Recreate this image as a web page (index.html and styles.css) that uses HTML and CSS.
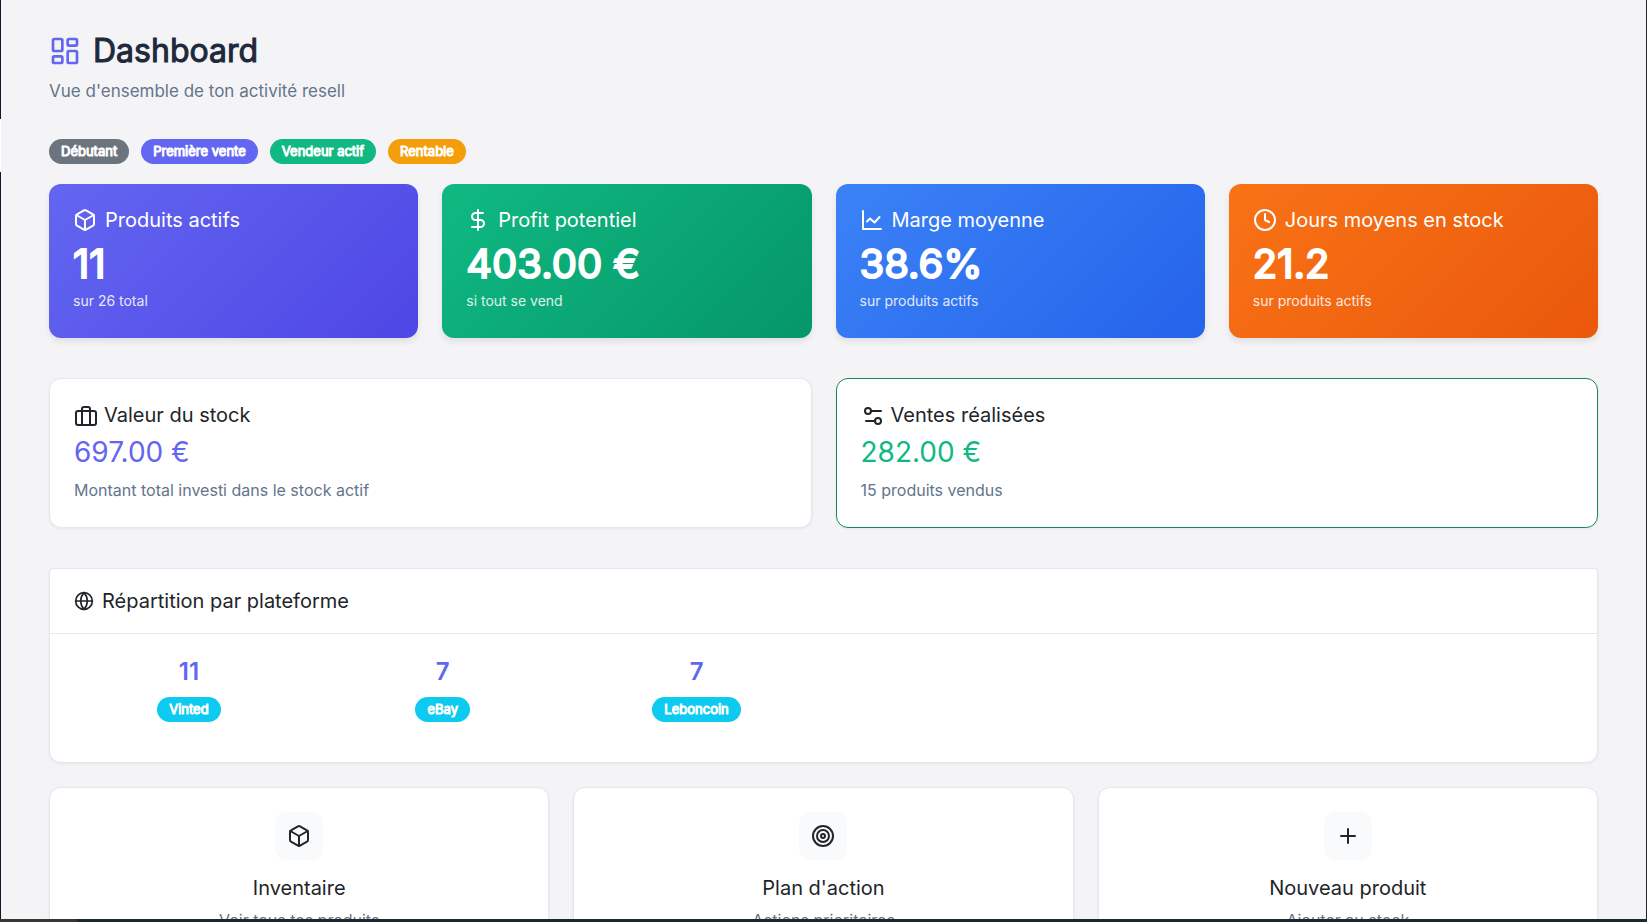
FILE: index.html
```html
<!DOCTYPE html>
<html lang="fr">
<head>
<meta charset="UTF-8">
<meta name="viewport" content="width=device-width, initial-scale=1.0">
<title>Dashboard</title>
<link rel="stylesheet" href="styles.css">
</head>
<body>
  <div class="app">
    <aside class="sidebar"><div class="sidebar-active"></div></aside>

    <main class="content">
      <header class="page-header">
        <h1>
          <svg class="icon icon-lg" viewBox="0 0 24 24"><rect x="3" y="3" width="7" height="9" rx="1"/><rect x="14" y="3" width="7" height="5" rx="1"/><rect x="14" y="12" width="7" height="9" rx="1"/><rect x="3" y="16" width="7" height="5" rx="1"/></svg>
          Dashboard
        </h1>
        <p>Vue d'ensemble de ton activité resell</p>
      </header>

      <div class="badges">
        <span class="badge badge-gray">Débutant</span>
        <span class="badge badge-primary">Première vente</span>
        <span class="badge badge-success">Vendeur actif</span>
        <span class="badge badge-warning">Rentable</span>
      </div>

      <!-- KPI -->
      <section class="stats">
        <div class="stat stat-indigo">
          <h2><svg class="icon" viewBox="0 0 24 24"><path d="M21 16V8a2 2 0 0 0-1-1.73l-7-4a2 2 0 0 0-2 0l-7 4A2 2 0 0 0 3 8v8a2 2 0 0 0 1 1.73l7 4a2 2 0 0 0 2 0l7-4A2 2 0 0 0 21 16z"/><path d="M3.3 7l8.7 5 8.7-5"/><path d="M12 22V12"/></svg>Produits actifs</h2>
          <div class="stat-value">11</div>
          <small>sur 26 total</small>
        </div>
        <div class="stat stat-green">
          <h2><svg class="icon" viewBox="0 0 24 24"><path d="M12 2v20"/><path d="M17 5H9.5a3.5 3.5 0 0 0 0 7h5a3.5 3.5 0 0 1 0 7H6"/></svg>Profit potentiel</h2>
          <div class="stat-value">403.00 €</div>
          <small>si tout se vend</small>
        </div>
        <div class="stat stat-blue">
          <h2><svg class="icon" viewBox="0 0 24 24"><path d="M3 3v18h18"/><path d="M7 13.5l3-3 4.5 4 5-5.5"/></svg>Marge moyenne</h2>
          <div class="stat-value">38.6%</div>
          <small>sur produits actifs</small>
        </div>
        <div class="stat stat-orange">
          <h2><svg class="icon" viewBox="0 0 24 24"><circle cx="12" cy="12" r="10"/><path d="M12 6v6l4 2"/></svg>Jours moyens en stock</h2>
          <div class="stat-value">21.2</div>
          <small>sur produits actifs</small>
        </div>
      </section>

      <section class="totals">
        <div class="card total">
          <h2><svg class="icon" viewBox="0 0 24 24"><rect x="2" y="8" width="20" height="14" rx="2"/><path d="M16 22V6a2 2 0 0 0-2-2h-4a2 2 0 0 0-2 2v16"/></svg>Valeur du stock</h2>
          <div class="total-value">697.00 €</div>
          <p>Montant total investi dans le stock actif</p>
        </div>
        <div class="card total total-sales">
          <h2><svg class="icon" viewBox="0 0 24 24"><path d="M20 8H10"/><path d="M14 18H5"/><circle cx="17" cy="18" r="3"/><circle cx="7" cy="8" r="3"/></svg>Ventes réalisées</h2>
          <div class="total-value">282.00 €</div>
          <p>15 produits vendus</p>
        </div>
      </section>

      <section class="card platforms">
        <h2><svg class="icon icon-sm" viewBox="0 0 24 24"><circle cx="12" cy="12" r="10"/><path d="M2 12h20"/><path d="M12 2a15.3 15.3 0 0 1 4 10 15.3 15.3 0 0 1-4 10 15.3 15.3 0 0 1-4-10 15.3 15.3 0 0 1 4-10z"/></svg>Répartition par plateforme</h2>
        <div class="platform-grid">
          <div class="platform">
            <strong>11</strong>
            <span class="badge badge-info">Vinted</span>
          </div>
          <div class="platform">
            <strong>7</strong>
            <span class="badge badge-info">eBay</span>
          </div>
          <div class="platform">
            <strong>7</strong>
            <span class="badge badge-info">Leboncoin</span>
          </div>
        </div>
      </section>

      <!-- raccourcis -->
      <nav class="actions">
        <a class="card action" href="#inventaire">
          <span class="action-icon"><svg class="icon" viewBox="0 0 24 24"><path d="M21 16V8a2 2 0 0 0-1-1.73l-7-4a2 2 0 0 0-2 0l-7 4A2 2 0 0 0 3 8v8a2 2 0 0 0 1 1.73l7 4a2 2 0 0 0 2 0l7-4A2 2 0 0 0 21 16z"/><path d="M3.3 7l8.7 5 8.7-5"/><path d="M12 22V12"/></svg></span>
          <h2>Inventaire</h2>
          <p>Voir tous tes produits</p>
        </a>
        <a class="card action" href="#plan">
          <span class="action-icon"><svg class="icon" viewBox="0 0 24 24"><circle cx="12" cy="12" r="10"/><circle cx="12" cy="12" r="6"/><circle cx="12" cy="12" r="2"/></svg></span>
          <h2>Plan d'action</h2>
          <p>Actions prioritaires</p>
        </a>
        <a class="card action" href="#nouveau">
          <span class="action-icon"><svg class="icon" viewBox="0 0 24 24"><path d="M12 5v14"/><path d="M5 12h14"/></svg></span>
          <h2>Nouveau produit</h2>
          <p>Ajouter au stock</p>
        </a>
      </nav>
    </main>
  </div>
  <div class="bottom-bar"></div>
</body>
</html>
```

FILE: styles.css
```css
* {
  box-sizing: border-box;
}

body {
  background-color: #f4f4f7;
  color: #212529;
  font-family: Inter, "Liberation Sans", sans-serif;
  font-size: 16px;
  line-height: 24px;
  display: flex;
  flex-direction: column;
  height: 100vh;
  margin: 0;
  overflow: hidden;
}

h1, h2, p {
  margin: 0;
}

h2 {
  display: flex;
  align-items: center;
  gap: 8px;
  font-size: 20px;
  font-weight: 400;
  line-height: 24px;
}

/* layout */
.app {
  display: flex;
  flex: 1;
  min-height: 0;
  border-right: 1px solid #26282c;
}

.sidebar {
  width: 1px;
  padding-top: 119px;
  background-color: #0f172a;
  box-shadow: 4px 0 12px rgba(0, 0, 0, 0.05);
}

.sidebar-active {
  height: 53px;
  background-color: #ffffff;
}

.content {
  flex: 1;
  padding: 32px 48px;
  overflow: hidden;
}

.bottom-bar {
  height: 3px;
  background: linear-gradient(to right, #3a3636 77px, #1f282c 77px);
}

.icon {
  width: 24px;
  height: 24px;
  flex-shrink: 0;
  fill: none;
  stroke: currentColor;
  stroke-width: 2;
  stroke-linecap: round;
  stroke-linejoin: round;
}

.icon-lg {
  width: 32px;
  height: 32px;
  color: #6366f1;
}

.icon-sm {
  width: 20px;
  height: 20px;
}

/* header */
.page-header {
  margin-bottom: 35px;
}

.page-header h1 {
  display: flex;
  align-items: center;
  gap: 12px;
  margin-bottom: 8px;
  color: #1e293b;
  font-size: 32px;
  font-weight: 400;
  line-height: 38px;
  -webkit-text-stroke: 1px #1e293b;
}

.page-header p {
  color: #64748b;
  font-size: 17px;
  line-height: 26px;
}

/* badges */
.badges {
  display: flex;
  gap: 12px;
  margin-bottom: 20px;
}

.badge {
  padding: 0 12px;
  border-radius: 50px;
  color: #ffffff;
  font-size: 13px;
  font-weight: 400;
  line-height: 25px;
  -webkit-text-stroke: 1px #ffffff;
}

.badge-gray { background-color: #6c757d; }
.badge-primary { background-color: #6366f1; }
.badge-success { background-color: #10b981; }
.badge-warning { background-color: #f59e0b; }
.badge-info { background-color: #0dcaf0; }

/* stats */
.stats {
  display: grid;
  grid-template-columns: repeat(4, 1fr);
  gap: 24px;
  margin-bottom: 40px;
}

.stat {
  padding: 24px;
  border-radius: 12px;
  color: #ffffff;
  box-shadow: 0 4px 6px rgba(0, 0, 0, 0.08);
}

.stat h2 {
  margin-bottom: 8px;
}

.stat-value {
  font-size: 40px;
  font-weight: 400;
  line-height: 48px;
  -webkit-text-stroke: 2px #ffffff;
}

.stat small {
  display: block;
  font-size: 14px;
  line-height: 26px;
  opacity: 0.85;
}

.stat-indigo { background: linear-gradient(135deg, #6366f1, #4f46e5); }
.stat-green { background: linear-gradient(135deg, #10b981, #059669); }
.stat-blue { background: linear-gradient(135deg, #3b82f6, #2563eb); }
.stat-orange { background: linear-gradient(135deg, #f97316, #ea580c); }

/* cards */
.card {
  background-color: #ffffff;
  border: 1px solid #e2e8f0;
  border-radius: 12px;
  box-shadow: 0 1px 3px rgba(0, 0, 0, 0.06);
}

.totals {
  display: grid;
  grid-template-columns: repeat(2, 1fr);
  gap: 24px;
  margin-bottom: 40px;
}

.total {
  padding: 24px;
}

.total h2 {
  gap: 6px;
  margin-bottom: 8px;
}

.total-value {
  margin-bottom: 8px;
  color: #6366f1;
  font-size: 28px;
  line-height: 34px;
}

.total p {
  color: #64748b;
  line-height: 26px;
}

.total-sales {
  border-color: #198754;
}

.total-sales .total-value {
  color: #10b981;
}

.platforms {
  margin-bottom: 24px;
  border-top-left-radius: 4px;
  border-top-right-radius: 4px;
}

.platforms h2 {
  padding: 20px 24px;
  border-bottom: 1px solid #e2e8f0;
}

.platform-grid {
  display: grid;
  grid-template-columns: repeat(6, 1fr);
  gap: 24px;
  padding: 24px 24px 40px;
}

.platform {
  display: flex;
  flex-direction: column;
  align-items: center;
  gap: 11px;
}

.platform strong {
  color: #6366f1;
  font-size: 24px;
  font-weight: 600;
  line-height: 28px;
}

/* actions */
.actions {
  display: grid;
  grid-template-columns: repeat(3, 1fr);
  gap: 24px;
}

.action {
  display: flex;
  flex-direction: column;
  align-items: center;
  padding: 24px;
  color: inherit;
  text-decoration: none;
}

.action-icon {
  display: flex;
  align-items: center;
  justify-content: center;
  width: 48px;
  height: 48px;
  margin-bottom: 16px;
  border-radius: 12px;
  background-color: #f8fafc;
}

.action h2 {
  margin-bottom: 8px;
}

.action p {
  color: #64748b;
}
```
